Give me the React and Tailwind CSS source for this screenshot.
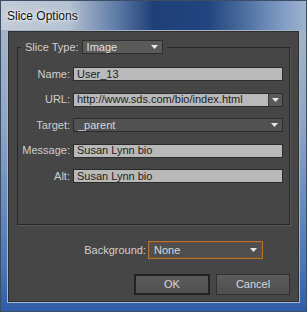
import { } from 'react';

const font = { fontFamily: '"Liberation Sans", Arial, sans-serif' };

function Arrow({ className = '' }) {
  return (
    <svg width="7" height="4" viewBox="0 0 7 4" className={className}>
      <path d="M0 0h7L3.5 4z" fill="#e8e8e8" />
    </svg>
  );
}

function Label({ children }) {
  return (
    <span className="w-[52px] shrink-0 text-right text-[11px] leading-none text-[#cfcfcf]">{children}</span>
  );
}

function TextField({ value }) {
  return (
    <div className="flex h-[14px] w-[210px] items-center border border-[#2c2c2c] bg-[#b9b9b9] pl-[3px] text-[11px] leading-none text-[#1e1e1e]">
      {value}
    </div>
  );
}

export default function App() {
  return (
    <div
      className="relative h-[312px] w-[307px] overflow-hidden border border-[#3c4d66] bg-[linear-gradient(180deg,#a9b8cb_0%,#8ea6c6_40%,#4a77b8_85%,#2f5ea8_100%)]"
      style={font}
    >
      {/* title bar */}
      <div className="flex h-[29px] items-center bg-[linear-gradient(90deg,#c3ccd7_0%,#b5c2d2_22%,#5d7ba6_38%,#1f3f78_50%,#22457f_68%,#4d6f9f_80%,#7f9bc4_92%,#9fb2cf_100%)] pl-[6px]">
        <span className="text-[12px] text-[#111] [text-shadow:0_0_6px_#fff,0_0_3px_#fff]">Slice Options</span>
      </div>

      {/* body */}
      <div className="ml-[6px] flex h-[273px] w-[293px] flex-col border border-[#a7b6c8] bg-[#464646] shadow-[inset_0_0_0_1px_#2e2e2e]">
        <fieldset className="mx-[9px] mt-[9px] border border-[#262626] px-0 pb-[41px] pt-0 shadow-[1px_1px_0_#575757]">
          <legend className="ml-[3px] flex items-center px-[4px]">
            <span className="mr-[3px] text-[11px] leading-none text-[#cfcfcf]">Slice Type:</span>
            <div className="flex h-[14px] w-[81px] items-center justify-between border border-[#2f2f2f] bg-[#5a5a5a] pl-[4px] pr-[4px] text-[11px] leading-none text-[#e2e2e2]">
              Image
              <Arrow />
            </div>
          </legend>

          <div className="flex flex-col gap-[11.5px] pt-[13px]">
            <div className="flex items-center gap-[3px]">
              <Label>Name:</Label>
              <TextField value="User_13" />
            </div>
            <div className="flex items-center gap-[3px]">
              <Label>URL:</Label>
              <div className="flex h-[14px] w-[210px] items-stretch border border-[#2c2c2c] text-[11px] leading-none">
                <div className="flex flex-1 items-center bg-[#b9b9b9] pl-[3px] text-[#1e1e1e]">http://www.sds.com/bio/index.html</div>
                <div className="flex w-[14px] items-center justify-center border-l border-[#3a3a3a] bg-[#595959]">
                  <Arrow />
                </div>
              </div>
            </div>
            <div className="flex items-center gap-[3px]">
              <Label>Target:</Label>
              <div className="flex h-[14px] w-[210px] items-center justify-between border border-[#2c2c2c] bg-[#515151] pl-[4px] pr-[4px] text-[11px] leading-none text-[#d6d6d6]">
                _parent
                <Arrow />
              </div>
            </div>
            <div className="flex items-center gap-[3px]">
              <Label>Message:</Label>
              <TextField value="Susan Lynn bio" />
            </div>
            <div className="flex items-center gap-[3px]">
              <Label>Alt:</Label>
              <TextField value="Susan Lynn bio" />
            </div>
          </div>
        </fieldset>

        <div className="mt-[16px] flex items-center justify-end gap-[2px] pr-[36px]">
          <span className="text-[11px] leading-none text-[#cfcfcf]">Background:</span>
          <div className="flex h-[18px] w-[115px] items-center justify-between border border-[#b8742f] bg-[#4f4f4f] pl-[5px] pr-[5px] text-[11px] leading-none text-[#dadada] shadow-[inset_0_0_0_1px_#6b5130]">
            None
            <Arrow />
          </div>
        </div>

        <div className="mt-[15px] flex justify-end gap-[6px] pr-[9px]">
          <button className="flex h-[21px] w-[76px] items-center justify-center border-2 border-[#222] bg-[linear-gradient(180deg,#5c5c5c,#4f4f4f)] text-[11px] text-[#d8d8d8]">
            OK
          </button>
          <button className="flex h-[21px] w-[74px] items-center justify-center border border-[#303030] bg-[linear-gradient(180deg,#5c5c5c,#4f4f4f)] text-[11px] text-[#d8d8d8]">
            Cancel
          </button>
        </div>
      </div>
    </div>
  );
}
